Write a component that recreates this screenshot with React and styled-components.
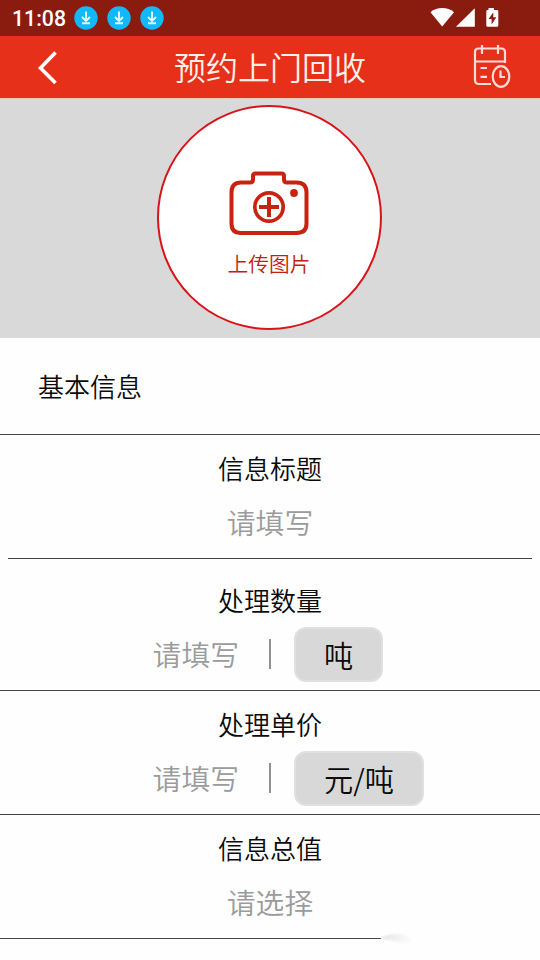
import React from "react";
import styled, { createGlobalStyle } from "styled-components";

const GlobalStyle = createGlobalStyle`
  * {
    box-sizing: border-box;
  }
  body {
    margin: 0;
    background: #fefefe;
    font-family: "Noto Sans CJK SC", sans-serif;
    font-weight: 350;
    color: #0a0a0a;
  }
`;

const Page = styled.div`
  width: 540px;
  height: 960px;
  overflow: hidden;
  display: flex;
  flex-direction: column;
`;

const StatusBar = styled.div`
  height: 36px;
  flex: none;
  display: flex;
  align-items: center;
  padding: 0 40px 0 12px;
  background: #8a1b0f;
  color: white;
`;

const Clock = styled.span`
  width: 61.5px;
  font-family: Roboto, sans-serif;
  font-size: 21.3px;
  font-weight: 500;
  line-height: 36px;
  white-space: nowrap;
  padding-top: 2px;
`;

const Downloads = styled.div`
  display: flex;
  gap: 9px;
  flex: 1;
`;

const StatusIcons = styled.div`
  display: flex;
  align-items: center;
`;

const Header = styled.header`
  height: 62px;
  flex: none;
  display: grid;
  grid-template-columns: 100px 1fr 100px;
  align-items: center;
  background: #e63019;
`;

const BackButton = styled.div`
  display: flex;
  padding: 2px 0 0 36px;
`;

const Title = styled.h1`
  margin: 0;
  height: 62px;
  font-size: 32px;
  font-weight: 350;
  line-height: 60px;
  text-align: center;
  color: #fff0ec;
`;

const OrdersButton = styled.div`
  display: flex;
  padding: 0 0 2px 32px;
`;

const Banner = styled.div`
  height: 240px;
  flex: none;
  display: flex;
  justify-content: center;
  padding: 6px 1px 0 0;
  border-top: 1px solid #f3c8c0;
  background: #d9d9d9;
`;

const Upload = styled.div`
  width: 225px;
  height: 225px;
  display: flex;
  flex-direction: column;
  align-items: center;
  padding: 64px 1px 0 0;
  border: 2px solid #d8141a;
  border-radius: 50%;
  background: white;
`;

const UploadText = styled.span`
  margin-top: 10px;
  font-size: 20.7px;
  line-height: 36px;
  color: #c0220f;
`;

const SectionTitle = styled.h2`
  margin: 0;
  height: 97px;
  flex: none;
  padding-left: 38px;
  border-bottom: 1px solid #444;
  font-size: 26px;
  font-weight: 350;
  line-height: 95px;
`;

const Field = styled.div`
  height: 124px;
  flex: none;
  margin: ${(props) => (props.$inset ? "0 8px 8px" : "0")};
  border-bottom: 1px solid #444;
`;

const Label = styled.div`
  height: 60px;
  padding-top: 8px;
  font-size: 26px;
  line-height: 50px;
  text-align: center;
`;

const InputRow = styled.div`
  height: 55px;
  display: flex;
  align-items: center;
  justify-content: ${(props) => (props.$center ? "center" : "flex-start")};
`;

const Placeholder = styled.span`
  height: 55px;
  width: ${(props) => (props.$half ? "269px" : "auto")};
  padding-right: ${(props) => (props.$half ? "30px" : "0")};
  text-align: right;
  font-size: 28.8px;
  line-height: 53px;
  color: #9b9b9b;
`;

const Divider = styled.span`
  width: 2px;
  height: 30px;
  margin: 0 23px 1px 0;
  background: #909090;
`;

const Unit = styled.span`
  height: 55px;
  padding: 0 28px;
  border: 2px solid #e0e0e0;
  border-radius: 12px;
  background: #d8d8d8;
  font-size: 29.2px;
  line-height: 50px;
`;

// last divider fades out under the drag handle
const Fade = styled.div`
  height: 124px;
  flex: none;
  position: relative;
`;

const LastLine = styled.div`
  width: 381px;
  height: 1px;
  margin-top: 8px;
  background: #444;
`;

const Smudge = styled.svg`
  position: absolute;
  left: 379px;
  top: 113px;
`;

function DownloadIcon() {
  return (
    <svg width="24" height="24" viewBox="0 0 24 24">
      <circle cx="12" cy="12" r="11.7" fill="#10b9fb" />
      <path d="M12 5.5v9M8 11l4 4 4-4M8 17.2h8" fill="none" stroke="#e4faff" strokeWidth="1.9" />
    </svg>
  );
}

function SignalIcons() {
  return (
    <svg width="70" height="22" viewBox="0 0 70 22">
      <path d="M.5 5.2C7-.4 17.5-.4 24 5.2L12.2 19.5z" fill="#fff" />
      <path d="M26 19.8L44.8 1.2v18.6z" fill="#fff" />
      <path
        d="M58.500 1h5.400v2h3.200q1.200 0 1.200 1.200v14.400q0 1.200-1.200 1.200h-9.600q-1.200 0-1.200-1.200V4.200q0-1.200 1.200-1.200h1z"
        fill="#fff"
      />
      <path d="M63.300 5.200v5h3l-4.700 7.300v-5.500h-3z" fill="#8a1b0f" />
    </svg>
  );
}

function BackIcon() {
  return (
    <svg width="24" height="36" viewBox="0 0 24 36">
      <path d="M19.500 2.500L4.500 18l15 15" fill="none" stroke="#fff" strokeWidth="3.600" />
    </svg>
  );
}

function OrdersIcon() {
  return (
    <svg width="40" height="46" viewBox="0 0 40 46" fill="none" stroke="#ffdcd5" strokeWidth="2.200">
      <path d="M33 20V9q0-3.500-3.500-3.500H6.500Q3 5.500 3 9v28q0 4 4 4h12M3 18.500h30" />
      <path d="M10 2v9M26 2v9M8.500 25H15M8.500 33.800H15" />
      <ellipse cx="29" cy="33.500" rx="8.300" ry="10.300" />
      <path d="M28.500 27.500v6.500H33" />
    </svg>
  );
}

function CameraIcon() {
  return (
    <svg width="80" height="64" viewBox="0 0 80 64" fill="none" stroke="#c82310" strokeWidth="4">
      <path d="M12 11.500h9q3 0 3-3V5q0-2.500 2.500-2.500h26Q55 2.500 55 5v3.500q0 3 3 3h9.500q10 0 10 10v31q0 9.500-10 9.500H12q-9.500 0-9.500-9.500v-31q0-10 9.500-10z" />
      <circle cx="40" cy="36" r="14.200" strokeWidth="3.700" />
      <path d="M40 26v20M30 36h20" />
      <circle cx="65" cy="22" r="3.900" fill="#c82310" stroke="none" />
    </svg>
  );
}

function AmountField({ label, unit }) {
  return (
    <Field>
      <Label>{label}</Label>
      <InputRow>
        <Placeholder $half>请填写</Placeholder>
        <Divider />
        <Unit>{unit}</Unit>
      </InputRow>
    </Field>
  );
}

function App() {
  return (
    <Page>
      <GlobalStyle />
      <StatusBar>
        <Clock>11:08</Clock>
        <Downloads>
          <DownloadIcon />
          <DownloadIcon />
          <DownloadIcon />
        </Downloads>
        <StatusIcons>
          <SignalIcons />
        </StatusIcons>
      </StatusBar>
      <Header>
        <BackButton>
          <BackIcon />
        </BackButton>
        <Title>预约上门回收</Title>
        <OrdersButton>
          <OrdersIcon />
        </OrdersButton>
      </Header>
      <Banner>
        <Upload>
          <CameraIcon />
          <UploadText>上传图片</UploadText>
        </Upload>
      </Banner>
      <SectionTitle>基本信息</SectionTitle>
      <Field $inset>
        <Label>信息标题</Label>
        <InputRow $center>
          <Placeholder>请填写</Placeholder>
        </InputRow>
      </Field>
      <AmountField label="处理数量" unit="吨" />
      <AmountField label="处理单价" unit="元/吨" />
      <Fade>
        <Label>信息总值</Label>
        <InputRow $center>
          <Placeholder>请选择</Placeholder>
        </InputRow>
        <LastLine />
        <Smudge width="44" height="22" viewBox="0 0 44 22">
          <defs>
            <linearGradient id="smudge" x1="0" y1="0" x2="1" y2="0.4">
              <stop offset="0" stopColor="#aaa" />
              <stop offset="0.2" stopColor="#e6e6e6" />
              <stop offset="0.6" stopColor="#f3f3f3" />
              <stop offset="1" stopColor="#fdfdfd" />
            </linearGradient>
            <filter id="soft">
              <feGaussianBlur stdDeviation="1" />
            </filter>
          </defs>
          <path d="M1 10.500Q18 2 31 10q3 3 5 8Q22 14 1 10.500z" fill="url(#smudge)" filter="url(#soft)" />
        </Smudge>
      </Fade>
    </Page>
  );
}

export default App;
